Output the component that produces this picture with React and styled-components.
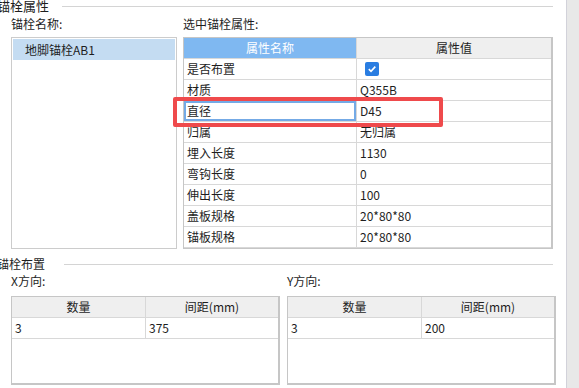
import styled, { createGlobalStyle, css } from 'styled-components';

const GlobalStyle = createGlobalStyle`
    html, body {
        margin: 0;
        padding: 0;
        background: #ffffff;
    }
    body {
        font-family: "Noto Sans CJK SC", "Noto Sans", "Liberation Sans", sans-serif;
        font-size: 12px;
        color: #1e1e1e;
    }
`;

const Page = styled.div`
    width: 579px;
    height: 388px;
    display: flex;
    overflow: hidden;
    background: #ffffff;
`;

const Main = styled.div`
    width: 566px;
    display: flex;
    flex-direction: column;
`;

const Strip = styled.div`
    flex: 1;
    background: #e8e8e8;
    border-left: 1px solid #d2d2da;
`;

const GroupTitle = styled.div`
    display: flex;
    align-items: center;
    height: 14px;
    margin-top: ${(p) => p.top}px;
    margin-left: -3px;
    padding-right: 13px;
    font-size: ${(p) => p.size}px;
    line-height: 14px;

    &::after {
        content: '';
        flex: 1;
        height: 1px;
        margin-left: ${(p) => p.gap}px;
        background: #d4d4d4;
    }
`;

const Columns = styled.div`
    display: flex;
    gap: ${(p) => p.gap}px;
    padding-left: 11px;
    margin-top: ${(p) => p.top}px;
`;

const Column = styled.div`
    width: ${(p) => p.width}px;
    display: flex;
    flex-direction: column;
`;

const Label = styled.div`
    height: 16px;
    line-height: 16px;
    margin-bottom: ${(p) => p.gap}px;
    padding-left: ${(p) => p.indent || 0}px;
`;

const ListBox = styled.div`
    height: 212px;
    border: 1px solid #cccccc;
    padding: 1px;
    box-sizing: border-box;
`;

const ListItem = styled.div`
    height: 21px;
    line-height: 21px;
    padding-left: 12px;
    ${(p) =>
        p.selected &&
        css`
            background: #c4dcf2;
        `}
`;

const PropWrap = styled.div`
    position: relative;
`;

const Grid = styled.div`
    display: grid;
    grid-template-columns: ${(p) => p.cols};
    grid-auto-rows: 21px;
    align-content: start;
    height: ${(p) => p.height}px;
    box-sizing: border-box;
    border: 1px solid #c6c6c6;
    border-right-width: 2px;
    border-bottom-width: 2px;
    background: #ffffff;
`;

const Cell = styled.div`
    box-sizing: border-box;
    line-height: 20px;
    padding-left: 3px;
    border-right: 1px solid #d8d8d8;
    border-bottom: 1px solid #d8d8d8;
    white-space: nowrap;
    overflow: hidden;
    display: flex;
    align-items: center;

    &:nth-child(${(p) => p.n || 2}n) {
        border-right: none;
    }

    ${(p) =>
        p.head &&
        css`
            justify-content: center;
            padding-left: 0;
            background: #efefef;
        `}
    ${(p) =>
        p.active &&
        css`
            background: #7fb8f1;
            color: #ffffff;
        `}
    ${(p) =>
        p.editing &&
        css`
            box-shadow: inset 0 0 0 2px #74aae6;
        `}
`;

const CheckBox = styled.span`
    width: 14px;
    height: 14px;
    margin-left: 5px;
    border-radius: 2px;
    background: #2a7de1;
    display: inline-flex;
    align-items: center;
    justify-content: center;
`;

const Highlight = styled.div`
    position: absolute;
    left: -10px;
    top: 60px;
    width: 270px;
    height: 30px;
    box-sizing: border-box;
    border: 4px solid #ef4a4c;
    border-radius: 2px;
    pointer-events: none;
`;

const props = [
    ['是否布置', 'check'],
    ['材质', 'Q355B'],
    ['直径', 'D45'],
    ['归属', '无归属'],
    ['埋入长度', '1130'],
    ['弯钩长度', '0'],
    ['伸出长度', '100'],
    ['盖板规格', '20*80*80'],
    ['锚板规格', '20*80*80'],
];

function LayoutTable({ count, spacing }) {
    return (
        <Grid cols="134px 1fr" height={89}>
            <Cell head>数量</Cell>
            <Cell head>间距(mm)</Cell>
            <Cell>{count}</Cell>
            <Cell>{spacing}</Cell>
        </Grid>
    );
}

export default function App() {
    return (
        <Page>
            <GlobalStyle />
            <Main>
                <GroupTitle top={-1} size={13} gap={13}>锚栓属性</GroupTitle>

                <Columns gap={6} top={3}>
                    <Column width={166}>
                        <Label gap={5}>锚栓名称:</Label>
                        <ListBox>
                            <ListItem selected>地脚锚栓AB1</ListItem>
                        </ListBox>
                    </Column>
                    <Column width={370}>
                        <Label gap={5}>选中锚栓属性:</Label>
                        <PropWrap>
                            <Grid cols="173px 1fr" height={212}>
                                <Cell head active>属性名称</Cell>
                                <Cell head>属性值</Cell>
                                {props.map(([name, value]) => [
                                    <Cell key={name} editing={name === '直径'}>{name}</Cell>,
                                    <Cell key={name + '-v'}>
                                        {value === 'check' ? (
                                            <CheckBox>
                                                <svg width="10" height="10" viewBox="0 0 10 10">
                                                    <polyline
                                                        points="1.8,5.2 4,7.3 8.3,2.6"
                                                        fill="none"
                                                        stroke="#ffffff"
                                                        strokeWidth="1.6"
                                                    />
                                                </svg>
                                            </CheckBox>
                                        ) : (
                                            value
                                        )}
                                    </Cell>,
                                ])}
                            </Grid>
                            <Highlight />
                        </PropWrap>
                    </Column>
                </Columns>

                <GroupTitle top={8} size={12} gap={19}>锚栓布置</GroupTitle>

                <Columns gap={7} top={2}>
                    <Column width={269}>
                        <Label gap={7}>X方向:</Label>
                        <LayoutTable count="3" spacing="375" />
                    </Column>
                    <Column width={269}>
                        <Label gap={7}>Y方向:</Label>
                        <LayoutTable count="3" spacing="200" />
                    </Column>
                </Columns>
            </Main>
            <Strip />
        </Page>
    );
}
